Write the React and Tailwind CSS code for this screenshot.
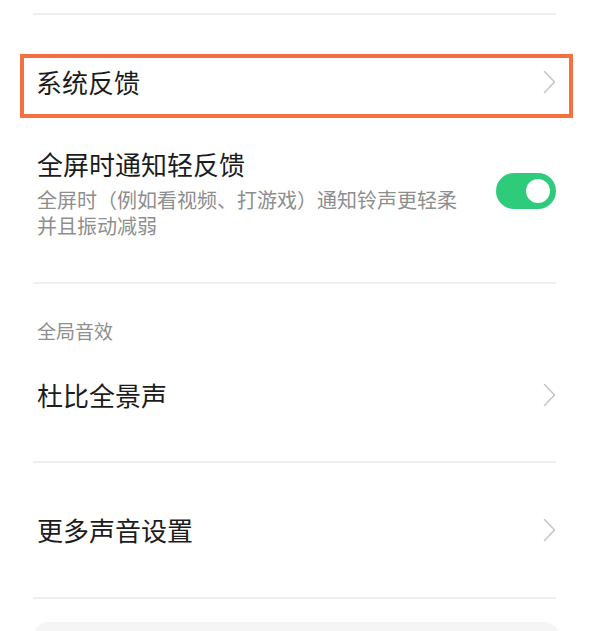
import { useState } from "react";

const font = { fontFamily: '"Noto Sans CJK SC", "Noto Sans", sans-serif' };

function Chevron() {
  return (
    <svg width="13" height="24" viewBox="0 0 13 24" className="shrink-0">
      <polyline
        points="1.5,1.5 11.5,12 1.5,22.5"
        fill="none"
        stroke="#c6c6c6"
        strokeWidth="1.6"
        strokeLinecap="round"
        strokeLinejoin="round"
      />
    </svg>
  );
}

function Divider({ className = "" }) {
  return <div className={`h-[2px] bg-[#efefef] ${className}`} />;
}

function Toggle({ on, onChange }) {
  return (
    <button
      onClick={() => onChange(!on)}
      className={`shrink-0 w-[60px] h-[36px] rounded-full flex items-center px-[6px] transition ${
        on ? "bg-[#2ecb7b] justify-end" : "bg-gray-300 justify-start"
      }`}
    >
      <span className="block w-[24px] h-[24px] rounded-full bg-white" />
    </button>
  );
}

export default function App() {
  const [lightFeedback, setLightFeedback] = useState(true);

  return (
    <div className="w-[611px] h-[631px] overflow-hidden bg-white" style={font}>
      <div className="pl-[33px] pr-[55px]">
        <Divider className="mt-[13px]" />

        {/* 系统反馈 (highlighted) */}
        <div className="-ml-[13px] -mr-[17px] mt-[39px] h-[64px] border-4 border-[#f47040] pl-[12px] pr-[13px] pb-[8px] flex items-center justify-between">
          <span className="text-[26px] leading-none text-[#1c1c1c]">系统反馈</span>
          <Chevron />
        </div>

        {/* 全屏时通知轻反馈 */}
        <div className="mt-[33px] flex items-start justify-between pl-[4px]">
          <div>
            <div className="text-[26px] leading-none text-[#1c1c1c]">全屏时通知轻反馈</div>
            <div className="mt-[10px] text-[20px] leading-[26px] text-[#8e8e8e]">
              <div>全屏时（例如看视频、打游戏）通知铃声更轻柔</div>
              <div>并且振动减弱</div>
            </div>
          </div>
          <div className="mt-[22px]">
            <Toggle on={lightFeedback} onChange={setLightFeedback} />
          </div>
        </div>

        <Divider className="mt-[43px]" />

        <div className="mt-[37px] pl-[4px] text-[19px] leading-none text-[#8e8e8e]">全局音效</div>

        <div className="mt-[42px] pl-[4px] flex items-center justify-between">
          <span className="text-[26px] leading-none text-[#1c1c1c]">杜比全景声</span>
          <Chevron />
        </div>

        <Divider className="mt-[53px]" />

        <div className="mt-[54px] pl-[4px] flex items-center justify-between">
          <span className="text-[26px] leading-none text-[#1c1c1c]">更多声音设置</span>
          <Chevron />
        </div>

        <Divider className="mt-[54px]" />

        <div className="mt-[23px] -mr-[4px] h-[40px] rounded-t-2xl bg-[#f5f5f5]" />
      </div>
    </div>
  );
}
